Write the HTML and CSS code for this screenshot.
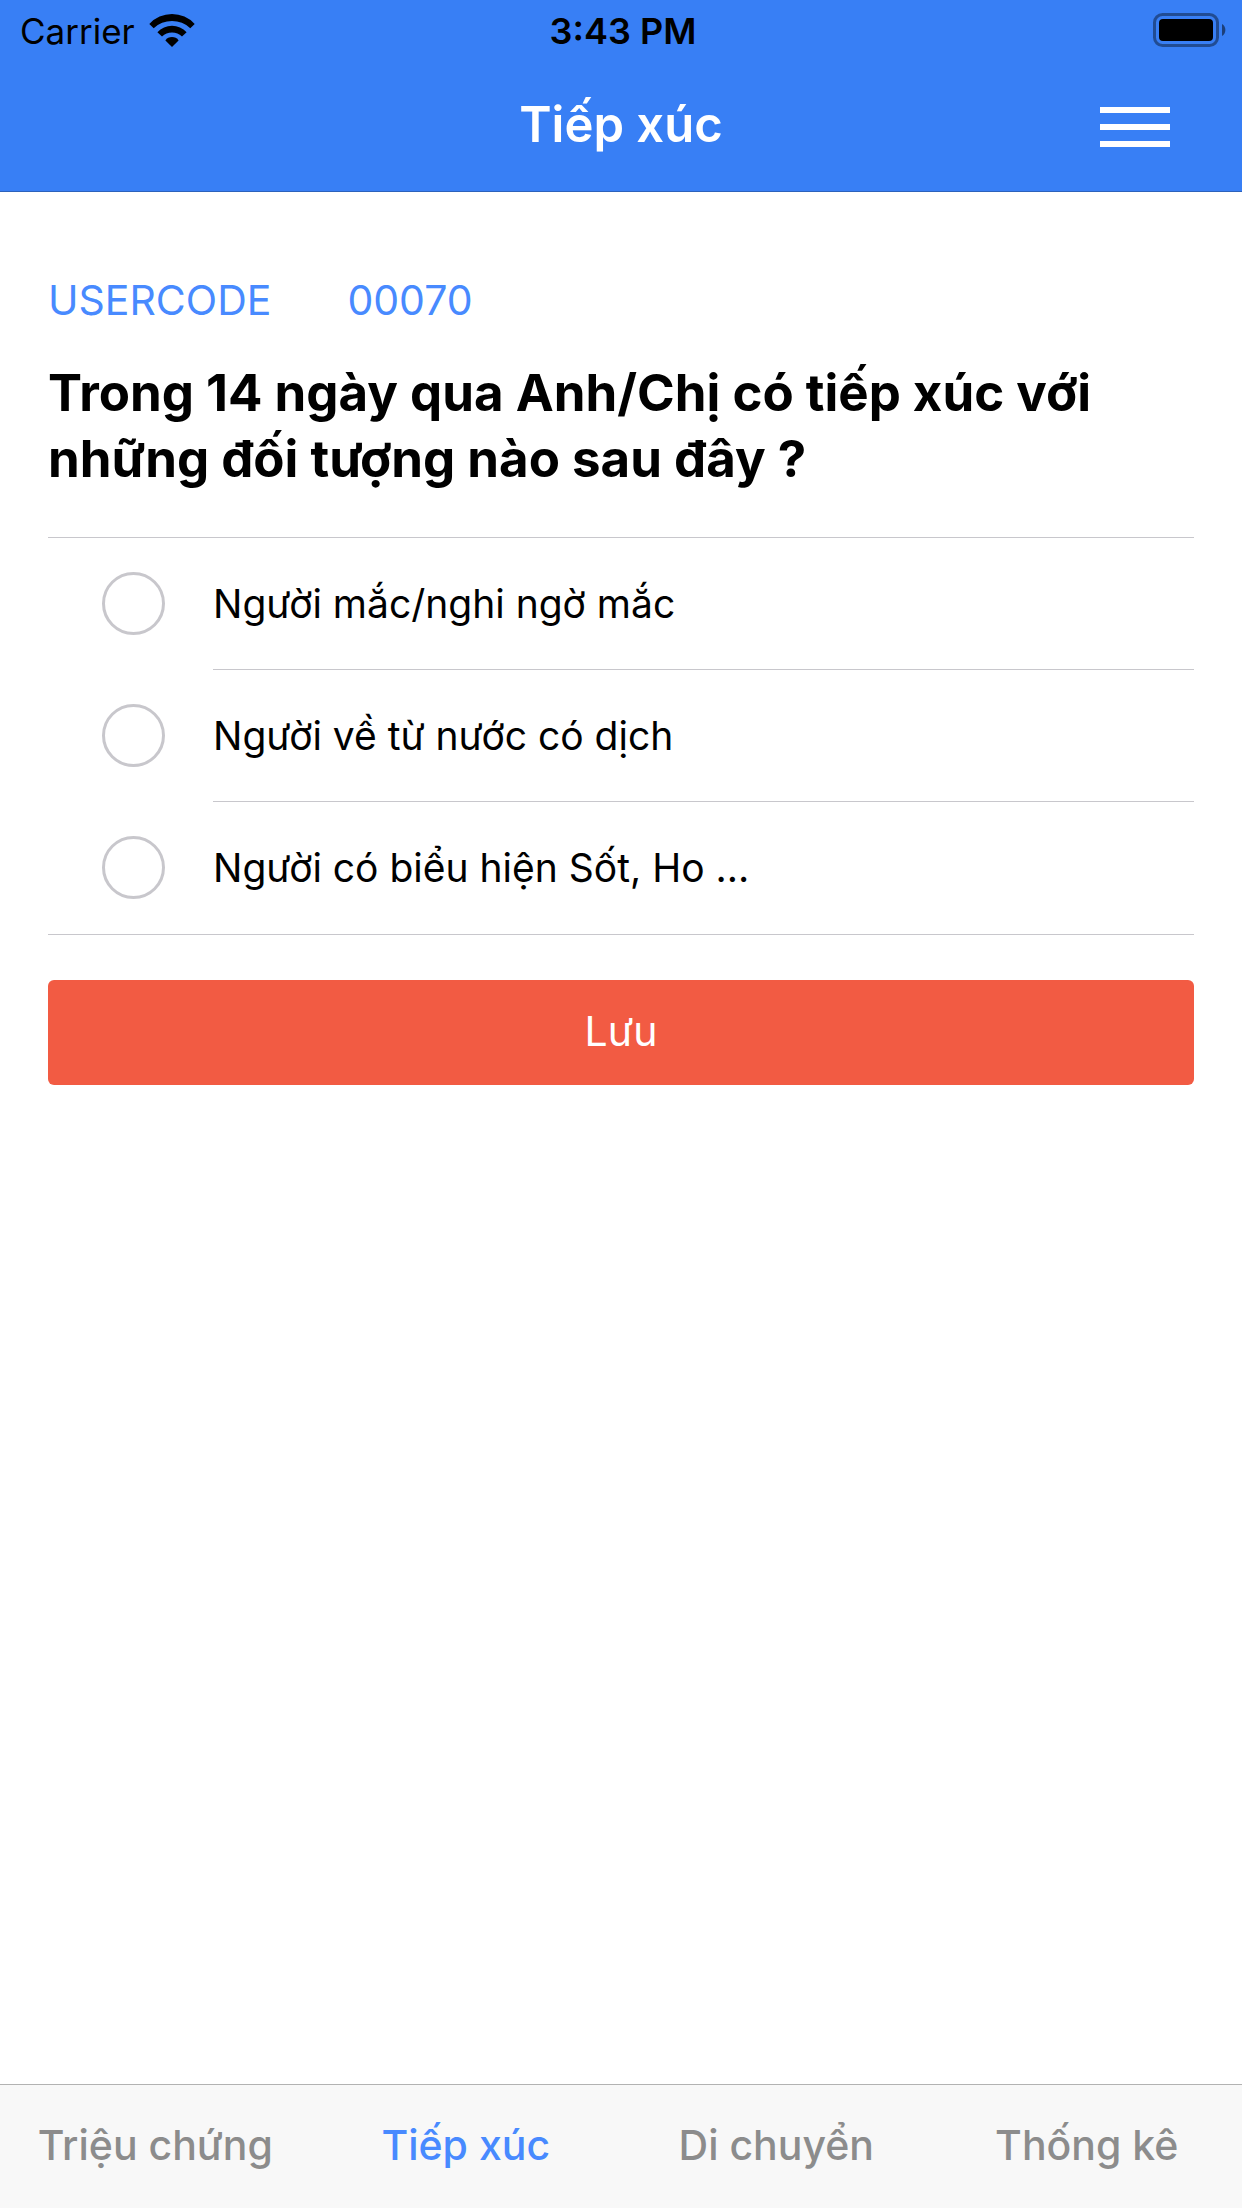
FILE: index.html
```html
<!DOCTYPE html>
<html lang="vi">
<head>
  <meta charset="utf-8">
  <meta name="viewport" content="width=device-width, initial-scale=1">
  <title>Tiếp xúc</title>
  <link rel="stylesheet" href="styles.css">
</head>
<body>
  <header class="header">
    <div class="status">
      <div class="status-left">
        <span>Carrier</span>
        <svg class="wifi" viewBox="149 13 46 33" aria-hidden="true">
          <path d="M149.3 23A30.8 30.8 0 0 1 194.7 23L190.3 27.3A26.5 26.5 0 0 0 153.7 27.3Z"/>
          <path d="M157.4 31.2A20 20 0 0 1 186.6 31.2L182 35.6A14.5 14.5 0 0 0 162 35.6Z"/>
          <path d="M165.4 39.4A8 8 0 0 1 178.6 39.4L172 46Z"/>
        </svg>
      </div>
      <span class="status-time">3:43 PM</span>
      <svg class="battery" viewBox="0 0 73 34" aria-hidden="true">
        <rect x="1.5" y="1.5" width="63" height="31" rx="8" fill="none" stroke="#000" stroke-width="3" opacity=".4"/>
        <rect x="6" y="6" width="54" height="22" rx="4"/>
        <path d="M69 11A7 7 0 0 1 69 23Z" opacity=".5"/>
      </svg>
    </div>
    <div class="navbar">
      <h1 class="title">Tiếp xúc</h1>
      <button class="menu" type="button" aria-label="Menu">
        <span class="menu-bar"></span>
        <span class="menu-bar"></span>
        <span class="menu-bar"></span>
      </button>
    </div>
  </header>

  <main class="content">
    <p class="usercode"><span>USERCODE</span><span>00070</span></p>
    <form class="survey">
      <fieldset class="question">
        <legend class="question-text">Trong 14 ngày qua Anh/Chị có tiếp xúc với những đối tượng nào sau đây ?</legend>
        <div class="options">
          <label class="option"><input class="check" type="checkbox"><span class="option-text">Người mắc/nghi ngờ mắc</span></label>
          <label class="option"><input class="check" type="checkbox"><span class="option-text">Người về từ nước có dịch</span></label>
          <label class="option"><input class="check" type="checkbox"><span class="option-text">Người có biểu hiện Sốt, Ho ...</span></label>
        </div>
      </fieldset>
      <button class="save" type="button">Lưu</button>
    </form>
  </main>

  <nav class="tabs">
    <a class="tab" href="#trieu-chung">Triệu chứng</a>
    <a class="tab tab-active" href="#tiep-xuc" aria-current="page">Tiếp xúc</a>
    <a class="tab" href="#di-chuyen">Di chuyển</a>
    <a class="tab" href="#thong-ke">Thống kê</a>
  </nav>
</body>
</html>
```

FILE: styles.css
```css
* {
  box-sizing: border-box;
}

body {
  display: flex;
  flex-direction: column;
  min-height: 100vh;
  margin: 0;
  background: #fff;
  color: #000;
  font-family: Inter, "Noto Sans", sans-serif;
  font-size: 41px;
}

button {
  border: 0;
  padding: 0;
  font: inherit;
  cursor: pointer;
}

.header {
  background: #387ff5;
  border-bottom: 1px solid #2c62bb;
}

.status {
  display: grid;
  grid-template-columns: 1fr auto 1fr;
  align-items: center;
  height: 60px;
  padding: 0 16px 0 20px;
  font-size: 35px;
  line-height: 44px;
}

.status-left {
  display: flex;
  align-items: center;
  gap: 14px;
}

.status-left span,
.status-time {
  padding-top: 2px;
}

.status-time {
  font-size: 36px;
  font-weight: 600;
}

.wifi {
  width: 46px;
  height: 33px;
}

.battery {
  width: 73px;
  height: 34px;
  justify-self: end;
}

.navbar {
  display: grid;
  grid-template-columns: 1fr auto 1fr;
  align-items: center;
  height: 131px;
  padding: 0 72px;
}

.title {
  grid-column: 2;
  margin: 0;
  padding-bottom: 2px;
  color: #fff;
  font-size: 49px;
  font-weight: 600;
  line-height: 60px;
}

.menu {
  display: flex;
  flex-direction: column;
  gap: 11px;
  width: 70px;
  padding-top: 2px;
  justify-self: end;
  background: none;
}

.menu-bar {
  height: 6px;
  background: #fff;
}

.content {
  flex: 1;
  padding: 84px 48px;
}

.usercode {
  display: flex;
  gap: 76px;
  margin: 0;
  color: #488aff;
  line-height: 48px;
}

.question {
  min-width: 0;
  margin: 0;
  border: 0;
  padding: 0;
}

.question-text {
  padding: 36px 0 45px;
  font-size: 51px;
  font-weight: 700;
  line-height: 66px;
}

.options {
  border-top: 1px solid #c8c7cc;
  border-bottom: 1px solid #c8c7cc;
}

.option {
  display: flex;
  align-items: center;
  gap: 48px;
  padding-left: 54px;
}

.check {
  flex: none;
  appearance: none;
  width: 63px;
  height: 63px;
  margin: 0 0 2px;
  border: 3px solid #c8c7cc;
  border-radius: 50%;
}

.check:checked {
  background: #488aff;
}

.option-text {
  flex: 1;
  border-bottom: 1px solid #c8c7cc;
  font-size: 39px;
  line-height: 131px;
}

.option:last-child .option-text {
  border-bottom: 0;
  padding-bottom: 1px;
}

.save {
  width: 100%;
  height: 105px;
  margin-top: 45px;
  padding-bottom: 3px;
  border-radius: 6px;
  background: #f25b43;
  color: #fff;
}

.tabs {
  display: grid;
  grid-template-columns: repeat(4, 1fr);
  border-top: 1px solid #b2b2b2;
  background: #f8f8f8;
}

.tab {
  padding: 35px 0 38px;
  color: #8c8c8c;
  font-weight: 500;
  line-height: 50px;
  text-align: center;
  text-decoration: none;
}

.tab-active {
  color: #488aff;
}
```
